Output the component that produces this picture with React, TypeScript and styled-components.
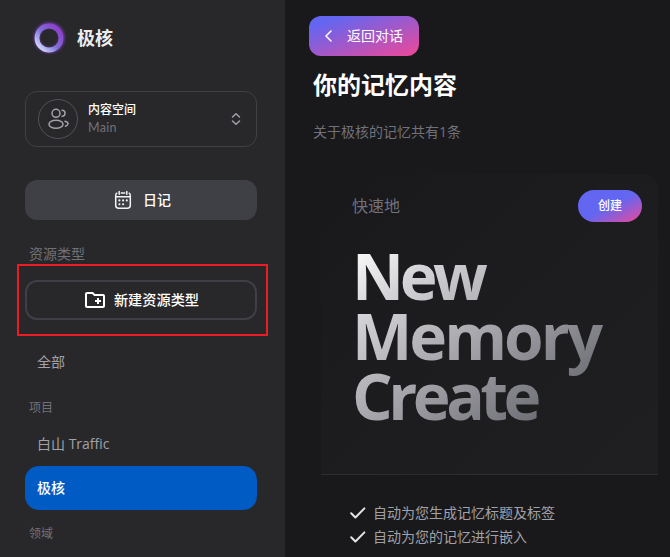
import React from "react";
import styled, { createGlobalStyle } from "styled-components";

const GlobalStyle = createGlobalStyle`
  *, *::before, *::after { box-sizing: border-box; }
  body {
    margin: 0;
    background: #19191b;
    color: #fff;
    font-family: "Open Sans", "Noto Sans CJK SC", sans-serif;
    overflow: hidden;
  }
  button { font: inherit; color: inherit; border: 0; background: none; padding: 0; }
  h1, h2, p, ul { margin: 0; padding: 0; font: inherit; }
  svg { display: block; flex: none; }
`;

const Page = styled.div`
  display: flex;
  width: 670px;
  height: 557px;
  overflow: hidden;
`;

const Sidebar = styled.aside`
  display: flex;
  flex-direction: column;
  width: 285px;
  flex: none;
  padding: 14px 28px 0 25px;
  background: #28282a;
`;

const Brand = styled.div`
  display: flex;
  align-items: center;
  gap: 4px;
  height: 48px;
`;

const BrandName = styled.span`
  font-size: 18px;
  line-height: 28px;
  font-weight: 700;
  color: #ededee;
`;

const SpacePicker = styled.button`
  display: flex;
  align-items: center;
  height: 56px;
  margin-top: 29px;
  padding: 0 12px;
  border: 1px solid #3f3f46;
  border-radius: 12px;
  text-align: left;
`;

const Avatar = styled.span`
  display: flex;
  align-items: center;
  justify-content: center;
  width: 40px;
  height: 40px;
  padding-left: 2px;
  border: 1px solid #52525b;
  border-radius: 50%;
  color: #a1a1aa;
`;

const PickerText = styled.span`
  display: flex;
  flex-direction: column;
  flex: 1;
  margin-left: 10px;
`;

const PickerLabel = styled.span`
  font-size: 12px;
  line-height: 18px;
  font-weight: 500;
`;

const PickerValue = styled.span`
  font-family: Lato, sans-serif;
  font-size: 12.5px;
  line-height: 18px;
  letter-spacing: 0.3px;
  color: #71717a;
`;

const SidebarButton = styled.button<{ $outlined?: boolean }>`
  display: flex;
  flex: none;
  align-items: center;
  justify-content: center;
  gap: ${(p) => (p.$outlined ? 7 : 8)}px;
  height: 40px;
  border-radius: 12px;
  border: ${(p) => (p.$outlined ? "2px solid #3f3f46" : "0")};
  background: ${(p) => (p.$outlined ? "transparent" : "#3f3f46")};
  margin-top: ${(p) => (p.$outlined ? 16 : 33)}px;
  font-size: ${(p) => (p.$outlined ? 14.2 : 14)}px;
  line-height: 20px;
  font-weight: 500;
`;

const SectionLabel = styled.div<{ $size: number; $gap: number }>`
  margin-top: ${(p) => p.$gap}px;
  padding-left: 4px;
  font-size: ${(p) => p.$size}px;
  line-height: 20px;
  color: #71717a;
`;

const Highlighted = styled.div`
  position: relative;
  display: flex;
  flex-direction: column;

  &::after {
    content: "";
    position: absolute;
    inset: 0 -11px -16px -8px;
    border: 2px solid #ed1c24;
    pointer-events: none;
  }
`;

const NavItem = styled.div<{ $active?: boolean; $gap: number }>`
  display: flex;
  flex: none;
  align-items: center;
  height: 44px;
  margin-top: ${(p) => p.$gap}px;
  padding: 0 12px 2px;
  border-radius: 14px;
  font-size: 14px;
  font-weight: ${(p) => (p.$active ? 500 : 400)};
  color: ${(p) => (p.$active ? "#fff" : "#a1a1aa")};
  background: ${(p) => (p.$active ? "#005bc4" : "transparent")};
`;

const Main = styled.main`
  display: flex;
  flex-direction: column;
  align-items: flex-start;
  flex: 1;
  min-width: 0;
  padding: 16px 12px 0 24px;
`;

const BackButton = styled.button`
  display: flex;
  align-items: center;
  gap: 11px;
  width: 110px;
  height: 40px;
  padding-left: 11px;
  border-radius: 12px;
  background: linear-gradient(to bottom right, #6366f1 14%, #ec4899 98%);
  font-size: 14px;
  line-height: 20px;
`;

const Title = styled.h1`
  margin: 13px 0 0 4px;
  font-size: 24px;
  line-height: 32px;
  font-weight: 700;
`;

const Subtitle = styled.p`
  margin: 20px 0 0 4px;
  font-size: 14px;
  line-height: 22px;
  color: #71717a;
`;

const Card = styled.section`
  align-self: stretch;
  height: 301px;
  margin: 31px 0 0 12px;
  padding: 16px 16px 0 31px;
  border-bottom: 1px solid #2d2d30;
  border-radius: 24px 16px 0 0;
  background: linear-gradient(to bottom right, #19191b 8%, #1c1c1e 35%, #1f1f21 100%);
`;

const CardHeader = styled.div`
  display: flex;
  align-items: center;
  justify-content: space-between;
  height: 32px;
`;

const CardKicker = styled.span`
  font-size: 16px;
  line-height: 24px;
  color: #71717a;
`;

const CreateButton = styled.button`
  width: 64px;
  height: 32px;
  border-radius: 16px;
  background: linear-gradient(to bottom right, #6366f1 50%, #ec4899 100%);
  font-size: 12px;
  line-height: 16px;
  font-weight: 500;
`;

const Headline = styled.h2`
  width: max-content;
  margin: 24px 0 0 0;
  font-family: "Open Sans", sans-serif;
  font-size: 64px;
  line-height: 60px;
  font-weight: 700;
  padding-bottom: 8px;
  padding-right: 4px;
  background: linear-gradient(to bottom right, #f4f4f5 5%, #d4d4d8 20%, #63636b 90%);
  background-clip: text;
  -webkit-background-clip: text;
  color: transparent;
`;

const HeadlineLine = styled.span<{ $tracking: number }>`
  display: block;
  letter-spacing: ${(p) => p.$tracking}px;
`;

const Features = styled.ul`
  margin: 26px 0 0 37px;
  list-style: none;
`;

const Feature = styled.li`
  display: flex;
  align-items: center;
  gap: 5px;
  height: 24px;
  font-size: 14px;
  line-height: 24px;
  color: #a1a1aa;
`;

const LogoIcon = () => (
  <svg width="48" height="48" viewBox="0 0 48 48" fill="none">
    <defs>
      <linearGradient id="ring" x1="12" y1="34" x2="33" y2="14" gradientUnits="userSpaceOnUse">
        <stop offset="0" stopColor="#d9e2fb" />
        <stop offset="0.5" stopColor="#7d70d8" />
        <stop offset="1" stopColor="#8b3fc9" />
      </linearGradient>
      <filter id="glow" x="-30%" y="-30%" width="160%" height="160%">
        <feGaussianBlur stdDeviation="1.6" />
      </filter>
      <filter id="soften" x="-20%" y="-20%" width="140%" height="140%">
        <feGaussianBlur stdDeviation="0.6" />
      </filter>
    </defs>
    <circle cx="24.3" cy="23.7" r="12.6" stroke="#8a3fd0" strokeWidth="4.8" opacity="0.85" filter="url(#glow)" />
    <circle cx="24" cy="24" r="12" stroke="url(#ring)" strokeWidth="4.8" filter="url(#soften)" />
  </svg>
);

const UsersIcon = () => (
  <svg width="24" height="24" viewBox="0 0 24 24" fill="none" stroke="currentColor" strokeWidth="1.5">
    <circle cx="9" cy="6.3" r="4" />
    <path d="M15 9.3a3 3 0 1 0 0-6" strokeLinecap="round" />
    <ellipse cx="9" cy="17.3" rx="7" ry="4" />
    <path d="M18 14.3c1.754.385 3 1.36 3 2.5 0 1.03-1.014 1.923-2.5 2.37" strokeLinecap="round" />
  </svg>
);

const SelectorIcon = () => (
  <svg width="16" height="16" viewBox="0 0 16 16" fill="none" stroke="#a1a1aa" strokeWidth="1.5" strokeLinecap="round" strokeLinejoin="round">
    <path d="M4.5 6 8 2.7 11.5 6M4.5 10 8 13.3 11.5 10" />
  </svg>
);

const CalendarIcon = () => (
  <svg width="24" height="24" viewBox="0 0 24 24" fill="none" stroke="#f4f4f5" strokeWidth="1.5" strokeLinecap="round">
    <path d="M8.2 3.6v2.6M15.8 3.6v2.6M10.3 5h3.4M5.8 5.2C5.1 5.7 4.7 6.6 4.7 7.8v9.4c0 2 1 3 3 3h8.6c2 0 3-1 3-3V7.8c0-1.2-.4-2.1-1.1-2.6M5 8.8h14" />
    <path d="M8.4 12.4h.01M12.1 12.4h.01M15.8 12.4h.01M8.4 16.2h.01M12.1 16.2h.01" strokeWidth="2.1" />
  </svg>
);

const FolderPlusIcon = () => (
  <svg width="24" height="24" viewBox="0 0 24 24" fill="#fff">
    <path d="M20 6h-8l-2-2H4c-1.11 0-1.99.89-1.99 2L2 18c0 1.11.89 2 2 2h16c1.11 0 2-.89 2-2V8c0-1.11-.89-2-2-2zm0 12H4V6h5.17l2 2H20v10zm-8-4h2v2h2v-2h2v-2h-2v-2h-2v2h-2z" />
  </svg>
);

const BackIcon = () => (
  <svg width="16" height="16" viewBox="0 0 16 16" fill="none" stroke="#fff" strokeWidth="1.5" strokeLinecap="round" strokeLinejoin="round">
    <path d="M11 3 6 8l5 5" />
  </svg>
);

const CheckIcon = () => (
  <svg width="22" height="18" viewBox="0 0 22 18" fill="none" stroke="#e4e4e7" strokeWidth="2" strokeLinecap="round" strokeLinejoin="round">
    <path d="m5.2 9.3 4.2 4.2L18.4 4.4" />
  </svg>
);

export default function App() {
  return (
    <>
      <GlobalStyle />
      <Page>
        <Sidebar>
          <Brand>
            <LogoIcon />
            <BrandName>极核</BrandName>
          </Brand>
          <SpacePicker>
            <Avatar>
              <UsersIcon />
            </Avatar>
            <PickerText>
              <PickerLabel>内容空间</PickerLabel>
              <PickerValue>Main</PickerValue>
            </PickerText>
            <SelectorIcon />
          </SpacePicker>
          <SidebarButton>
            <CalendarIcon />
            日记
          </SidebarButton>
          <SectionLabel $size={14} $gap={24}>资源类型</SectionLabel>
          <Highlighted>
            <SidebarButton $outlined>
              <FolderPlusIcon />
              新建资源类型
            </SidebarButton>
          </Highlighted>
          <NavItem $gap={20}>全部</NavItem>
          <SectionLabel $size={12} $gap={14}>项目</SectionLabel>
          <NavItem $gap={4}>白山 Traffic</NavItem>
          <NavItem $gap={0} $active>极核</NavItem>
          <SectionLabel $size={12} $gap={14}>领域</SectionLabel>
        </Sidebar>
        <Main>
          <BackButton>
            <BackIcon />
            返回对话
          </BackButton>
          <Title>你的记忆内容</Title>
          <Subtitle>关于极核的记忆共有1条</Subtitle>
          <Card>
            <CardHeader>
              <CardKicker>快速地</CardKicker>
              <CreateButton>创建</CreateButton>
            </CardHeader>
            <Headline>
              <HeadlineLine $tracking={-4.4}>New</HeadlineLine>
              <HeadlineLine $tracking={-3}>Memory</HeadlineLine>
              <HeadlineLine $tracking={-4.5}>Create</HeadlineLine>
            </Headline>
          </Card>
          <Features>
            <Feature>
              <CheckIcon />
              自动为您生成记忆标题及标签
            </Feature>
            <Feature>
              <CheckIcon />
              自动为您的记忆进行嵌入
            </Feature>
          </Features>
        </Main>
      </Page>
    </>
  );
}
